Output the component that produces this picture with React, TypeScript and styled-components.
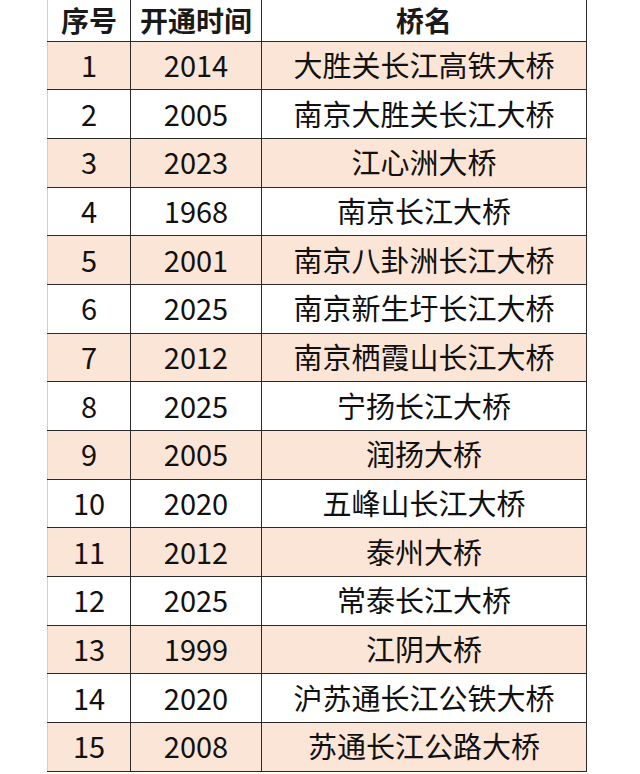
import React from 'react';
import styled, {createGlobalStyle} from "styled-components";

const bridges: [string, string][] = [
    ["2014", "大胜关长江高铁大桥"],
    ["2005", "南京大胜关长江大桥"],
    ["2023", "江心洲大桥"],
    ["1968", "南京长江大桥"],
    ["2001", "南京八卦洲长江大桥"],
    ["2025", "南京新生圩长江大桥"],
    ["2012", "南京栖霞山长江大桥"],
    ["2025", "宁扬长江大桥"],
    ["2005", "润扬大桥"],
    ["2020", "五峰山长江大桥"],
    ["2012", "泰州大桥"],
    ["2025", "常泰长江大桥"],
    ["1999", "江阴大桥"],
    ["2020", "沪苏通长江公铁大桥"],
    ["2008", "苏通长江公路大桥"],
]

const GlobalStyle = createGlobalStyle`
  html, body {
    margin: 0;
    padding: 0;
    background: #fff;
  }
  body {
    font-family: "Noto Sans CJK SC", "Microsoft YaHei", sans-serif;
  }
`

export default function App() {
    return (
        <>
            <GlobalStyle/>
            <Page>
                <Table>
                    <colgroup>
                        <col style={{width: 83}}/>
                        <col style={{width: 131}}/>
                        <col style={{width: 325}}/>
                    </colgroup>
                    <thead>
                    <HeadRow>
                        <HeadCell>序号</HeadCell>
                        <HeadCell>开通时间</HeadCell>
                        <HeadCell>桥名</HeadCell>
                    </HeadRow>
                    </thead>
                    <tbody>
                    {bridges.map(([year, name], i) => (
                        <Row key={i} $shaded={i % 2 === 0}>
                            <Cell $first>{i + 1}</Cell>
                            <Cell>{year}</Cell>
                            <Cell>{name}</Cell>
                        </Row>
                    ))}
                    </tbody>
                </Table>
            </Page>
        </>
    );
}

const Page = styled.div`
  width: 640px;
  height: 774px;
  overflow: hidden;
  padding-left: 47px;
  box-sizing: border-box;
`

const Table = styled.table`
  width: 540px;
  table-layout: fixed;
  border-collapse: collapse;
  color: #111;
`

const HeadRow = styled.tr`
  background: #fff;
`

const HeadCell = styled.th`
  padding: 0;
  height: 41px;
  box-sizing: border-box;
  border-right: 1px solid #2a2a2a;
  border-bottom: 1px solid #2a2a2a;
  font-size: 28px;
  font-weight: 700;
  line-height: 40px;
  text-align: center;
  color: #1a1a1a;

  &:first-child {
    border-left: 1px solid #cfcfcf;
  }
`

const Row = styled.tr<{ $shaded: boolean }>`
  background: ${p => p.$shaded ? "#fbe5d6" : "#fff"};
`

const Cell = styled.td<{ $first?: boolean }>`
  padding: 0 0 3px;
  height: 48.7px;
  box-sizing: border-box;
  border-right: 1px solid #2a2a2a;
  border-bottom: 1px solid #2a2a2a;
  border-left: ${p => p.$first ? "1px solid #cfcfcf" : "none"};
  font-size: 29px;
  font-weight: 400;
  line-height: 42px;
  text-align: center;
  white-space: nowrap;
`
